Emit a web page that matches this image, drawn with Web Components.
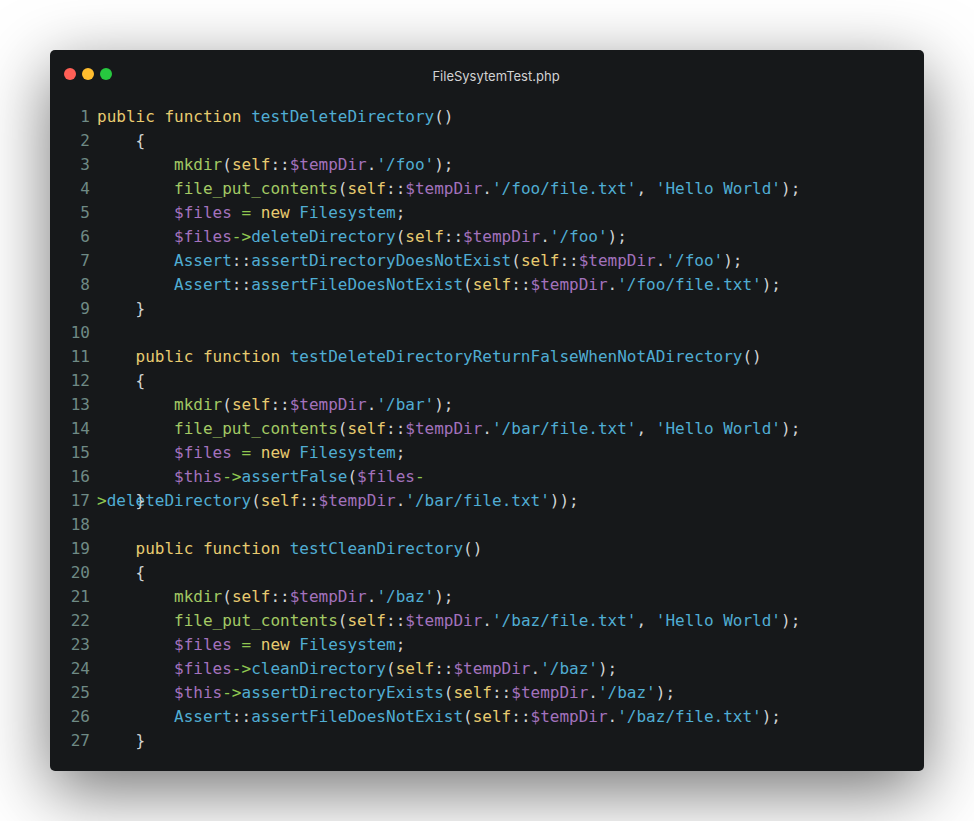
<!DOCTYPE html>
<html><head><meta charset="utf-8"><style>html,body{margin:0;background:#fff}</style></head><body>
<template id="tw"><style>
:host{display:block;padding:50px;box-sizing:border-box;width:974px;height:821px;overflow:hidden}
.win{background:#16181a;border-radius:5px;box-shadow:0 20px 68px rgba(0,0,0,.55);height:721px;box-sizing:border-box;display:flex;flex-direction:column}
.bar{display:flex;align-items:center;gap:6px;padding:18px 14px 0;height:30px;box-sizing:border-box}
.dot{width:12px;height:12px;border-radius:50%}
.title{flex:1;text-align:center;padding-right:36px;padding-top:4px;font:13px/16px Inter,"Liberation Sans",sans-serif;color:#d2d3d4}
.code{padding-top:25px;display:flex;flex-direction:column}
</style><div class="win"><div class="bar"><span class="dot" style="background:#ff5f56"></span><span class="dot" style="background:#ffbd2e"></span><span class="dot" style="background:#27c93f"></span><span class="title"><slot name="title"></slot></span></div><div class="code"><slot></slot></div></div></template>
<template id="tl"><style>
:host{display:grid;grid-template-columns:40px 1fr;column-gap:7px;font:16px/24px "DejaVu Sans Mono",monospace;height:24px;color:#d0d3d3}
.n{text-align:right;color:#6f8a85}
.c{display:grid;white-space:pre}
.c>div{grid-area:1/1}
.k{color:#e8cb70}.f{color:#a3c964}.b{color:#50add3}.p{color:#a372bd}.o{color:#8fc750}
</style><span class="n"></span><div class="c"></div></template>
<script>
const RX=/'[^']*'|\$\w+|->|-|>|=|\b\w+\b|[^\w\s]|\s+/g;
function tok(t){
 if(t[0]==="'")return'b';
 if(t[0]==='$')return'p';
 if(/^(public|function|new|self)$/.test(t))return'k';
 if(/^(mkdir|file_put_contents)$/.test(t))return'f';
 if(/^(->|-|>|=)$/.test(t))return'o';
 if(/^\w/.test(t))return'b';
 return'';
}
class CodeLine extends HTMLElement{
 constructor(){super();this.attachShadow({mode:'open'}).append(document.getElementById('tl').content.cloneNode(true))}
 connectedCallback(){
  const s=this.shadowRoot;
  s.querySelector('.n').textContent=this.getAttribute('n');
  const c=s.querySelector('.c');
  const rows=[this.getAttribute('text')||''];
  if(this.hasAttribute('over'))rows.push(this.getAttribute('over'));
  for(const r of rows){
   const d=document.createElement('div');
   for(const t of r.match(RX)||[]){
    const e=document.createElement('span');const k=tok(t);if(k)e.className=k;e.textContent=t;d.append(e);
   }
   c.append(d);
  }
 }
}
class CodeWindow extends HTMLElement{
 constructor(){super();this.attachShadow({mode:'open'}).append(document.getElementById('tw').content.cloneNode(true))}
}
customElements.define('code-line',CodeLine);
customElements.define('code-window',CodeWindow);
</script>
<code-window><span slot="title">FileSysytemTest.php</span>
<code-line n="1" text="public function testDeleteDirectory()"></code-line>
<code-line n="2" text="    {"></code-line>
<code-line n="3" text="        mkdir(self::$tempDir.'/foo');"></code-line>
<code-line n="4" text="        file_put_contents(self::$tempDir.'/foo/file.txt', 'Hello World');"></code-line>
<code-line n="5" text="        $files = new Filesystem;"></code-line>
<code-line n="6" text="        $files->deleteDirectory(self::$tempDir.'/foo');"></code-line>
<code-line n="7" text="        Assert::assertDirectoryDoesNotExist(self::$tempDir.'/foo');"></code-line>
<code-line n="8" text="        Assert::assertFileDoesNotExist(self::$tempDir.'/foo/file.txt');"></code-line>
<code-line n="9" text="    }"></code-line>
<code-line n="10" text=""></code-line>
<code-line n="11" text="    public function testDeleteDirectoryReturnFalseWhenNotADirectory()"></code-line>
<code-line n="12" text="    {"></code-line>
<code-line n="13" text="        mkdir(self::$tempDir.'/bar');"></code-line>
<code-line n="14" text="        file_put_contents(self::$tempDir.'/bar/file.txt', 'Hello World');"></code-line>
<code-line n="15" text="        $files = new Filesystem;"></code-line>
<code-line n="16" text="        $this->assertFalse($files-"></code-line>
<code-line n="17" text=">deleteDirectory(self::$tempDir.'/bar/file.txt'));" over="    }"></code-line>
<code-line n="18" text=""></code-line>
<code-line n="19" text="    public function testCleanDirectory()"></code-line>
<code-line n="20" text="    {"></code-line>
<code-line n="21" text="        mkdir(self::$tempDir.'/baz');"></code-line>
<code-line n="22" text="        file_put_contents(self::$tempDir.'/baz/file.txt', 'Hello World');"></code-line>
<code-line n="23" text="        $files = new Filesystem;"></code-line>
<code-line n="24" text="        $files->cleanDirectory(self::$tempDir.'/baz');"></code-line>
<code-line n="25" text="        $this->assertDirectoryExists(self::$tempDir.'/baz');"></code-line>
<code-line n="26" text="        Assert::assertFileDoesNotExist(self::$tempDir.'/baz/file.txt');"></code-line>
<code-line n="27" text="    }"></code-line>
</code-window>
</body></html>
